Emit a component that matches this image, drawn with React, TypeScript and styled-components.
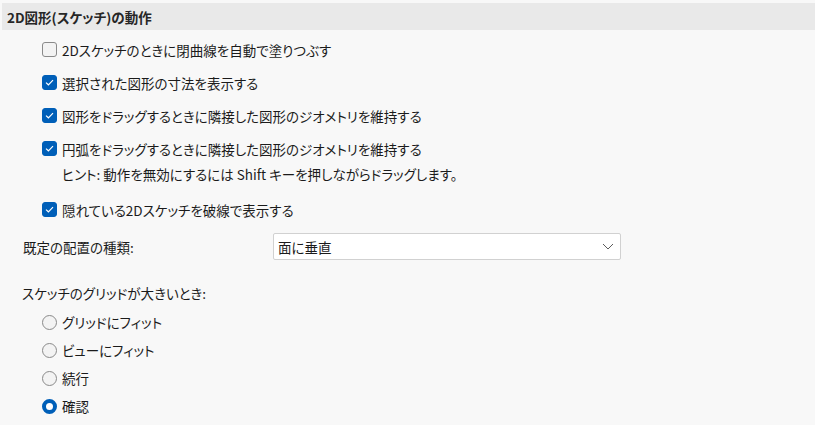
import React from 'react';
import styled, { createGlobalStyle } from 'styled-components';

const GlobalStyle = createGlobalStyle`
  html, body {
    margin: 0;
    padding: 0;
    background: #f8f8f8;
  }
  body {
    font-family: "Noto Sans CJK JP", "Noto Sans", sans-serif;
    font-size: 13.5px;
    font-feature-settings: "palt";
    color: #1b1b1b;
  }
`;

const Page = styled.div`
  width: 815px;
  height: 425px;
  padding-top: 3px;
  box-sizing: border-box;
  overflow: hidden;
`;

const SectionHeader = styled.div`
  margin-left: 2px;
  height: 27px;
  padding-left: 5px;
  display: flex;
  align-items: center;
  background: #e9e9e9;
  font-weight: 700;
  font-size: 13.5px;
  color: #262626;
`;

const CheckList = styled.div`
  padding-top: 3px;
  padding-left: 42px;
`;

const OptionRow = styled.label<{ $h: number }>`
  display: flex;
  align-items: center;
  gap: 5px;
  height: ${(p) => p.$h}px;
`;

const Box = styled.span<{ $checked: boolean }>`
  width: 15px;
  height: 15px;
  box-sizing: border-box;
  border-radius: 3px;
  flex: none;
  display: flex;
  align-items: center;
  justify-content: center;
  background: ${(p) => (p.$checked ? '#005fb8' : '#f3f3f3')};
  border: 1px solid ${(p) => (p.$checked ? '#005fb8' : '#8a8a8a')};
`;

const Hint = styled.div`
  padding-left: 20px;
  line-height: 18px;
  margin-bottom: 10px;
`;

const FieldRow = styled.div`
  display: flex;
  align-items: center;
  margin-top: 7px;
  padding-left: 23px;
`;

const FieldLabel = styled.div`
  width: 250px;
`;

const Select = styled.div`
  width: 348px;
  height: 27px;
  box-sizing: border-box;
  border: 1px solid #d1d1d1;
  border-radius: 2px;
  background: #ffffff;
  display: flex;
  align-items: center;
  justify-content: space-between;
  padding: 0 6px 0 4px;
`;

const GroupLabel = styled.div`
  margin-top: 23px;
  padding-left: 22px;
  line-height: 20px;
`;

const RadioList = styled.div`
  margin-top: 5px;
  padding-left: 42px;
`;

const Circle = styled.span<{ $checked: boolean }>`
  width: 15px;
  height: 15px;
  box-sizing: border-box;
  border-radius: 50%;
  flex: none;
  background: ${(p) => (p.$checked ? '#ffffff' : '#f3f3f3')};
  border: ${(p) => (p.$checked ? '4px solid #005fb8' : '1px solid #8a8a8a')};
`;

const Check = ({ checked }: { checked: boolean }) => (
  <Box $checked={checked}>
    {checked && (
      <svg width="9" height="7" viewBox="0 0 9 7">
        <path d="M1 3.6 L3.4 5.8 L8 1.2" fill="none" stroke="#fff" strokeWidth="1.2" />
      </svg>
    )}
  </Box>
);

const checks = [
  { text: '2Dスケッチのときに閉曲線を自動で塗りつぶす', checked: false },
  { text: '選択された図形の寸法を表示する', checked: true },
  { text: '図形をドラッグするときに隣接した図形のジオメトリを維持する', checked: true },
  {
    text: '円弧をドラッグするときに隣接した図形のジオメトリを維持する',
    checked: true,
    hint: 'ヒント: 動作を無効にするには Shift キーを押しながらドラッグします。',
  },
  { text: '隠れている2Dスケッチを破線で表示する', checked: true },
];

const radios = ['グリッドにフィット', 'ビューにフィット', '続行', '確認'];

const App: React.FC = () => (
  <Page>
    <GlobalStyle />
    <SectionHeader>2D図形(スケッチ)の動作</SectionHeader>

    <CheckList>
      {checks.map((c) => (
        <React.Fragment key={c.text}>
          <OptionRow $h={33}>
            <Check checked={c.checked} />
            {c.text}
          </OptionRow>
          {c.hint && <Hint>{c.hint}</Hint>}
        </React.Fragment>
      ))}
    </CheckList>

    <FieldRow>
      <FieldLabel>既定の配置の種類:</FieldLabel>
      <Select>
        <span>面に垂直</span>
        <svg width="12" height="7" viewBox="0 0 12 7">
          <path d="M1 1 L6 6 L11 1" fill="none" stroke="#5c5c5c" strokeWidth="1" />
        </svg>
      </Select>
    </FieldRow>

    <GroupLabel>スケッチのグリッドが大きいとき:</GroupLabel>
    <RadioList>
      {radios.map((r, i) => (
        <OptionRow key={r} $h={28}>
          <Circle $checked={i === 3} />
          {r}
        </OptionRow>
      ))}
    </RadioList>
  </Page>
);

export default App;
